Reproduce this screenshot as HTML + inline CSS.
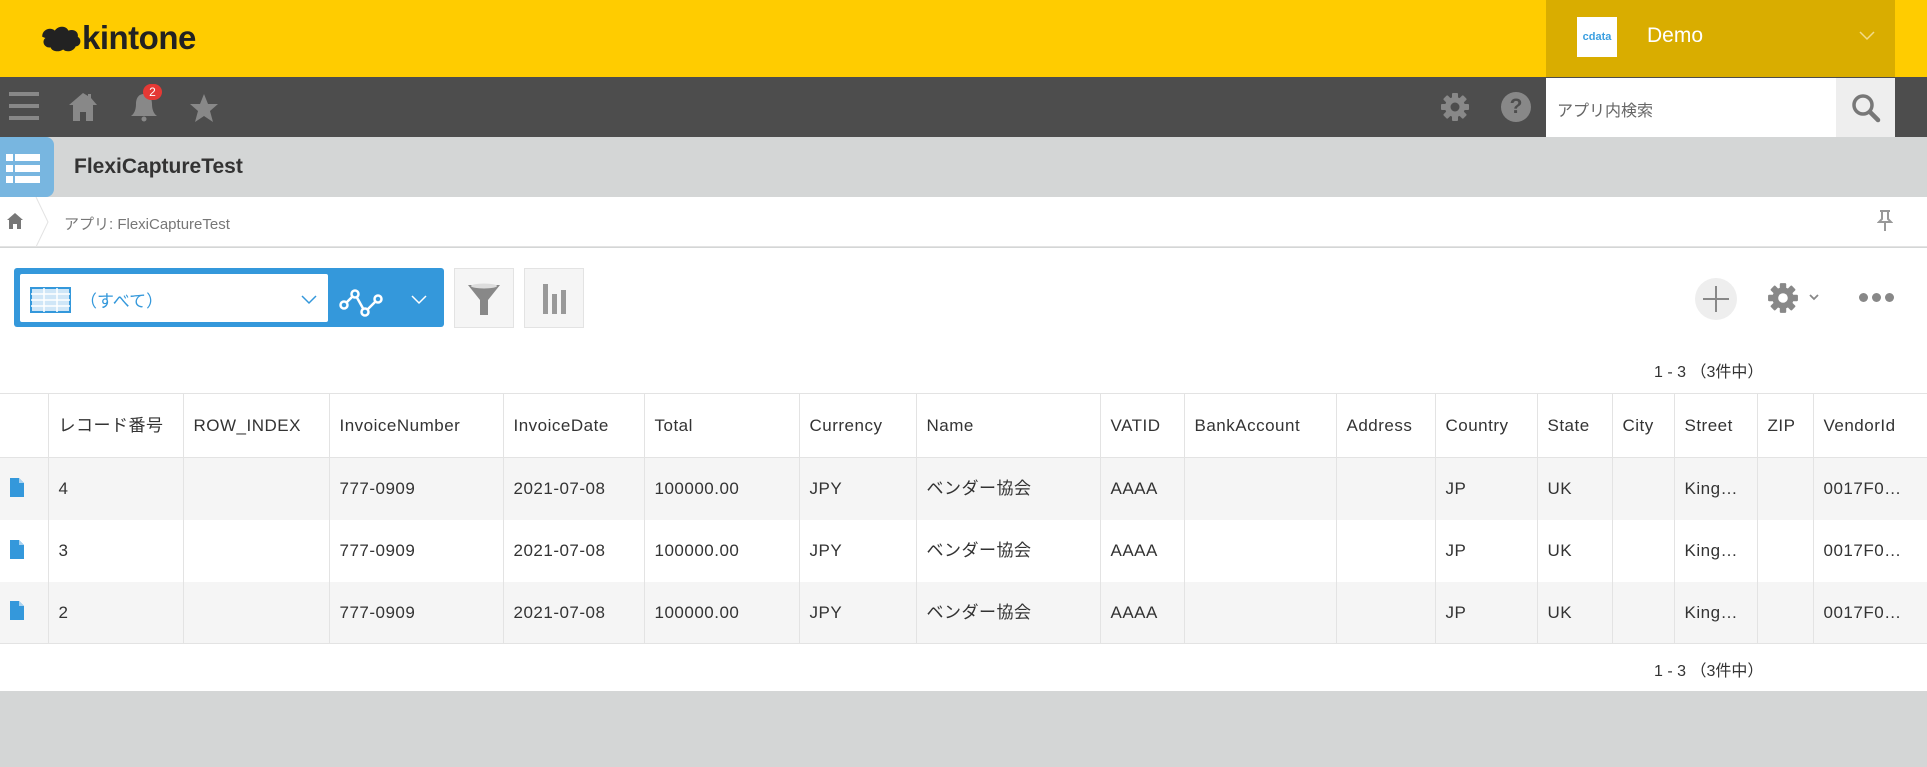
<!DOCTYPE html>
<html><head><meta charset="utf-8"><style>
*{margin:0;padding:0;box-sizing:border-box}
body{width:1927px;height:767px;background:#d4d6d6;font-family:"Liberation Sans","Noto Sans CJK JP",sans-serif;position:relative;overflow:hidden;color:#333}
.a{position:absolute}
table{border-collapse:collapse;table-layout:fixed;position:absolute;left:0;top:393px;width:1927px}
td,th{border-left:1px solid #e3e3e3;font-weight:normal;text-align:left;padding:0 0 0 10px;font-size:17px;white-space:nowrap;overflow:hidden;color:#333;letter-spacing:.5px;line-height:1}
th{height:64px;background:#fff}
td{height:62px}
tr.g td{background:#f5f5f5}
tr.w td{background:#fff}
td:first-child,th:first-child{border-left:none}
</style></head><body>
<div class="a" style="left:0;top:0;width:1927px;height:77px;background:#fc0"></div>
<svg class="a" style="left:36px;top:22px" width="46" height="34" viewBox="0 0 44 30"><path d="M6 12c0-6 8-9 12-5 3-5 11-5 13 0 5-2 10 1 9 6 4 2 3 9-2 9-2 5-9 6-12 3-4 3-11 2-12-2-6 1-9-6-5-9-3-1-4-2-3-2z" fill="#222"/></svg>
<div class="a" style="left:82px;top:19px;font-size:33px;font-weight:bold;color:#222;letter-spacing:-.5px">kintone</div>
<div class="a" style="left:1546px;top:0;width:349px;height:77px;background:#d9ad00"></div>
<div class="a" style="left:1577px;top:17px;width:40px;height:40px;background:#fff;color:#3b9fe0;font-size:11px;font-weight:bold;line-height:40px;text-align:center">cdata</div>
<div class="a" style="left:1647px;top:24px;font-size:21px;color:#fff">Demo</div>
<svg class="a" style="left:1858px;top:30px" width="18" height="12"><path d="M2 2l7 7 7-7" stroke="#f3dc8a" stroke-width="1.5" fill="none"/></svg>
<div class="a" style="left:0;top:77px;width:1927px;height:60px;background:#4d4d4d"></div>
<div class="a" style="left:9px;top:92px;width:30px;height:4px;background:#888;box-shadow:0 12px 0 #888,0 24px 0 #888"></div>
<svg class="a" style="left:68px;top:91px" width="30" height="32"><path d="M15 2L1 14h4v16h7v-9h6v9h7V14h4L23 7V3h-3v2z" fill="#888"/></svg>
<svg class="a" style="left:129px;top:92px" width="30" height="32"><path d="M15 2c-6 0-8 5-8 10 0 6-2 10-5 12h26c-3-2-5-6-5-12 0-5-2-10-8-10z" fill="#888"/><circle cx="15" cy="27" r="2.5" fill="#888"/></svg>
<div class="a" style="left:143px;top:84px;width:19px;height:16px;border-radius:8px;background:#e53935;color:#fff;font-size:12px;text-align:center;line-height:16px">2</div>
<svg class="a" style="left:189px;top:93px" width="30" height="30"><path d="M15 1l4 10h10l-8 7 3 11-9-6-9 6 3-11-8-7h10z" fill="#888"/></svg>
<svg class="a" style="left:1440px;top:92px" width="30" height="30" viewBox="0 0 30 30"><g fill="#888"><circle cx="15" cy="15" r="10"/><rect x="12" y="1" width="6" height="28" rx="1"/><rect x="12" y="1" width="6" height="28" rx="1" transform="rotate(45 15 15)"/><rect x="12" y="1" width="6" height="28" rx="1" transform="rotate(90 15 15)"/><rect x="12" y="1" width="6" height="28" rx="1" transform="rotate(135 15 15)"/></g><circle cx="15" cy="15" r="4.5" fill="#4d4d4d"/></svg>
<div class="a" style="left:1501px;top:92px;width:30px;height:30px;border-radius:50%;background:#888;color:#4d4d4d;font-weight:bold;font-size:21px;text-align:center;line-height:30px">?</div>
<div class="a" style="left:1546px;top:78px;width:290px;height:59px;background:#fff"></div>
<div class="a" style="left:1557px;top:97px;font-size:16px;color:#666">アプリ内検索</div>
<div class="a" style="left:1836px;top:78px;width:59px;height:59px;background:#eee"></div>
<svg class="a" style="left:1851px;top:93px" width="30" height="30"><circle cx="12" cy="12" r="9" stroke="#777" stroke-width="3.5" fill="none"/><path d="M19 19l8 8" stroke="#777" stroke-width="4.5" stroke-linecap="round"/></svg>
<div class="a" style="left:0;top:137px;width:54px;height:60px;background:#78b6e0;border-radius:0 8px 8px 0"></div>
<div class="a" style="left:6px;top:154px;width:34px;height:7px;background:#fff;box-shadow:0 11px 0 #fff,0 22px 0 #fff"></div>
<div class="a" style="left:13px;top:154px;width:2px;height:30px;background:#78b6e0"></div>
<div class="a" style="left:74px;top:155px;font-size:21px;font-weight:bold;color:#333">FlexiCaptureTest</div>
<div class="a" style="left:0;top:197px;width:1927px;height:50px;background:#fff;border-bottom:1px solid #e3e3e3"></div>
<svg class="a" style="left:6px;top:212px" width="18" height="18"><path d="M9 1L1 8h2v9h4v-5h4v5h4V8h2z" fill="#777"/></svg>
<svg class="a" style="left:34px;top:197px" width="20" height="50"><path d="M2 0l12 25L2 50" stroke="#e3e3e3" fill="none"/></svg>
<div class="a" style="left:64px;top:213px;font-size:15px;color:#777">アプリ: FlexiCaptureTest</div>
<svg class="a" style="left:1877px;top:209px" width="16" height="24"><path d="M3 2h10M5 2v8l-3 3h12l-3-3V2M8 13v9" stroke="#999" stroke-width="2" fill="none"/></svg>
<div class="a" style="left:0;top:248px;width:1927px;height:443px;background:#fff"></div>
<div class="a" style="left:14px;top:268px;width:430px;height:59px;background:#3498db;border-radius:3px"></div>
<div class="a" style="left:20px;top:274px;width:308px;height:48px;background:#fff;border-radius:2px"></div>
<svg class="a" style="left:30px;top:287px" width="41" height="26"><rect x="1" y="1" width="39" height="24" fill="#cfe6f7" stroke="#3498db" stroke-width="2"/><path d="M14 1v24M27 1v24M1 7h39M1 13h39M1 19h39" stroke="#fff" stroke-width="1.5"/></svg>
<div class="a" style="left:80px;top:287px;font-size:17px;color:#3498db">（すべて）</div>
<svg class="a" style="left:300px;top:294px" width="18" height="12"><path d="M2 2l7 7 7-7" stroke="#3498db" stroke-width="1.5" fill="none"/></svg>
<svg class="a" style="left:338px;top:285px" width="56" height="34"><path d="M6 20L17 9l10 18 13-13" stroke="#fff" stroke-width="2.5" fill="none"/><g fill="#3498db" stroke="#fff" stroke-width="2.5"><circle cx="6" cy="20" r="3.5"/><circle cx="17" cy="9" r="3.5"/><circle cx="27" cy="27" r="3.5"/><circle cx="40" cy="14" r="3.5"/></g></svg>
<svg class="a" style="left:410px;top:294px" width="18" height="12"><path d="M2 2l7 7 7-7" stroke="#fff" stroke-width="1.5" fill="none"/></svg>
<div class="a" style="left:454px;top:268px;width:60px;height:60px;background:#f5f5f5;border:1px solid #e3e3e3"></div>
<svg class="a" style="left:466px;top:281px" width="36" height="36"><path d="M2 4h32L22 19v15h-8V19z" fill="#888"/><ellipse cx="18" cy="5" rx="13" ry="2.5" fill="#ddd"/></svg>
<div class="a" style="left:524px;top:268px;width:60px;height:60px;background:#f5f5f5;border:1px solid #e3e3e3"></div>
<div class="a" style="left:543px;top:284px;width:5px;height:30px;background:#999"></div>
<div class="a" style="left:552px;top:294px;width:5px;height:20px;background:#999"></div>
<div class="a" style="left:561px;top:290px;width:5px;height:24px;background:#999"></div>
<div class="a" style="left:1695px;top:278px;width:42px;height:42px;border-radius:50%;background:#eee"></div>
<div class="a" style="left:1703px;top:298px;width:26px;height:2px;background:#888"></div>
<div class="a" style="left:1715px;top:286px;width:2px;height:26px;background:#888"></div>
<svg class="a" style="left:1767px;top:282px" width="32" height="32" viewBox="0 0 30 30"><g fill="#888"><circle cx="15" cy="15" r="10"/><rect x="12" y="1" width="6" height="28" rx="1"/><rect x="12" y="1" width="6" height="28" rx="1" transform="rotate(45 15 15)"/><rect x="12" y="1" width="6" height="28" rx="1" transform="rotate(90 15 15)"/><rect x="12" y="1" width="6" height="28" rx="1" transform="rotate(135 15 15)"/></g><circle cx="15" cy="15" r="4.5" fill="#fff"/></svg>
<svg class="a" style="left:1808px;top:293px" width="12" height="9"><path d="M2 2l4 4 4-4" stroke="#888" stroke-width="1.8" fill="none"/></svg>
<div class="a" style="left:1859px;top:293px;width:9px;height:9px;border-radius:50%;background:#888;box-shadow:13px 0 0 #888,26px 0 0 #888"></div>
<div class="a" style="left:1654px;top:358px;font-size:16px;color:#333">1 - 3 （3件中）</div>
<table>
<colgroup><col style="width:48px"><col style="width:135px"><col style="width:146px"><col style="width:174px"><col style="width:141px"><col style="width:155px"><col style="width:117px"><col style="width:184px"><col style="width:84px"><col style="width:152px"><col style="width:99px"><col style="width:102px"><col style="width:75px"><col style="width:62px"><col style="width:83px"><col style="width:56px"><col style="width:114px"></colgroup>
<tr style="border-top:1px solid #e3e3e3;border-bottom:1px solid #e3e3e3"><th></th><th>レコード番号</th><th>ROW_INDEX</th><th>InvoiceNumber</th><th>InvoiceDate</th><th>Total</th><th>Currency</th><th>Name</th><th>VATID</th><th>BankAccount</th><th>Address</th><th>Country</th><th>State</th><th>City</th><th>Street</th><th>ZIP</th><th>VendorId</th></tr>
<tr class="g"><td><svg width="14" height="19"><path d="M0 0h9l5 5v14H0z" fill="#3498db"/><path d="M9 0v5h5" fill="#a9d2f0"/></svg></td><td>4</td><td></td><td>777-0909</td><td>2021-07-08</td><td>100000.00</td><td>JPY</td><td>ベンダー協会</td><td>AAAA</td><td></td><td></td><td>JP</td><td>UK</td><td></td><td>King…</td><td></td><td>0017F0…</td></tr>
<tr class="w"><td><svg width="14" height="19"><path d="M0 0h9l5 5v14H0z" fill="#3498db"/><path d="M9 0v5h5" fill="#a9d2f0"/></svg></td><td>3</td><td></td><td>777-0909</td><td>2021-07-08</td><td>100000.00</td><td>JPY</td><td>ベンダー協会</td><td>AAAA</td><td></td><td></td><td>JP</td><td>UK</td><td></td><td>King…</td><td></td><td>0017F0…</td></tr>
<tr class="g" style="border-bottom:1px solid #e3e3e3"><td><svg width="14" height="19"><path d="M0 0h9l5 5v14H0z" fill="#3498db"/><path d="M9 0v5h5" fill="#a9d2f0"/></svg></td><td>2</td><td></td><td>777-0909</td><td>2021-07-08</td><td>100000.00</td><td>JPY</td><td>ベンダー協会</td><td>AAAA</td><td></td><td></td><td>JP</td><td>UK</td><td></td><td>King…</td><td></td><td>0017F0…</td></tr>
</table>
<div class="a" style="left:1654px;top:657px;font-size:16px;color:#333">1 - 3 （3件中）</div>
</body></html>
